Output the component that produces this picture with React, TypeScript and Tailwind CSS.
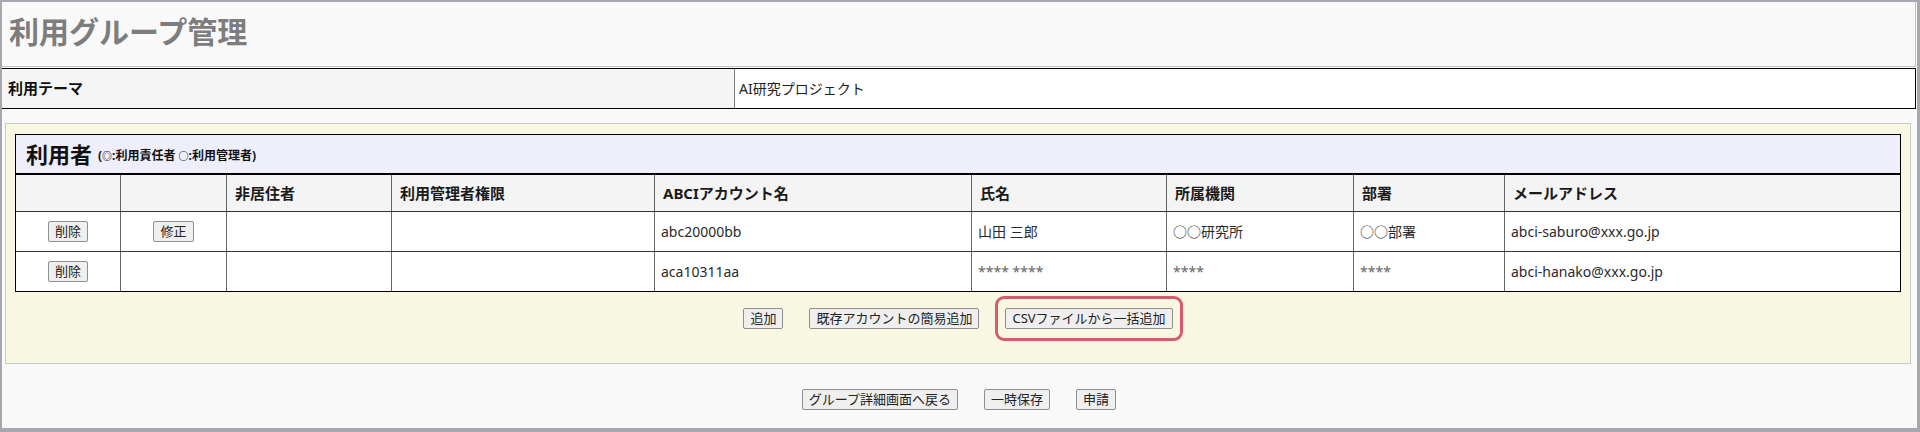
import React from "react";

const font = { fontFamily: '"Noto Sans", "Noto Sans CJK JP", sans-serif' };

function Btn({ children }: { children: React.ReactNode }) {
  return (
    <button className="h-[21px] px-[6px] bg-[#efefef] border border-[#8f8f8f] rounded-[2px] text-[13px] leading-none text-[#222] whitespace-nowrap">
      {children}
    </button>
  );
}

const cols =
  "grid grid-cols-[105px_106px_165px_263px_317px_195px_187px_151px_395px]";

export default function App() {
  const headers = ["", "", "非居住者", "利用管理者権限", "ABCIアカウント名", "氏名", "所属機関", "部署", "メールアドレス"];
  const rows: { del: boolean; edit: boolean; cells: string[]; masked: boolean[] }[] = [
    {
      del: true,
      edit: true,
      cells: ["", "", "abc20000bb", "山田 三郎", "○○研究所", "○○部署", "abci-saburo@xxx.go.jp"],
      masked: [false, false, false, false, false, false, false],
    },
    {
      del: true,
      edit: false,
      cells: ["", "", "aca10311aa", "**** ****", "****", "****", "abci-hanako@xxx.go.jp"],
      masked: [false, false, false, true, true, true, false],
    },
  ];
  return (
    <div
      style={font}
      className="w-[1920px] h-[432px] bg-[#a7a7af] pt-[2px] pl-[2px] pr-[3px] pb-[4px] overflow-hidden"
    >
      <div className="h-full bg-[#f9f9f9] flex flex-col">
        {/* header */}
        <div className="h-[65px] mr-[1px] border-b border-r border-[#c2c2c2] flex items-center pl-[7px] pb-[4px]">
          <h1 className="text-[30px] leading-none font-bold text-[#7d7d7d]">利用グループ管理</h1>
        </div>
        {/* theme */}
        <div className="mt-[1px] mr-[1px] h-[41px] border-y border-r border-black grid grid-cols-[733px_1fr]">
          <div className="bg-[#f5f5f5] border-r border-[#7a7a7a] flex items-center pl-[6px] text-[15px] font-bold text-[#111]">
            利用テーマ
          </div>
          <div className="bg-white flex items-center pl-[4px] text-[14px] text-[#222]">AI研究プロジェクト</div>
        </div>
        {/* users box */}
        <div className="mt-[14px] ml-[3px] mr-[6px] h-[241px] border border-[#c8c8c8] bg-[#f8f7e2] px-[9px] pt-[10px]">
          <div className="border border-black">
            <div className="h-[40px] bg-[#efeffb] border-b-2 border-black flex items-center pl-[10px]">
              <span className="text-[22px] font-bold text-[#111]">利用者</span>
              <span className="ml-[6px] text-[12px] font-bold text-[#111] mt-[4px]">(<span className="text-[10px]">◎</span>:利用責任者 <span className="text-[10px]">○</span>:利用管理者)</span>
            </div>
            <div className={`${cols} h-[37px] bg-[#f4f4f4] border-b border-[#333]`}>
              {headers.map((h, i) => (
                <div
                  key={i}
                  className={`flex items-center pl-[8px] text-[15px] font-bold text-[#1a1a1a] ${i < 8 ? "border-r border-[#666]" : ""}`}
                >
                  {h}
                </div>
              ))}
            </div>
            {rows.map((r, ri) => (
              <div
                key={ri}
                className={`${cols} bg-white ${ri === 0 ? "h-[40px] border-b border-[#333]" : "h-[39px]"}`}
              >
                <div className="flex items-center justify-center border-r border-[#666]">
                  {r.del && <Btn>削除</Btn>}
                </div>
                <div className="flex items-center justify-center border-r border-[#666]">
                  {r.edit && <Btn>修正</Btn>}
                </div>
                {r.cells.map((c, ci) => (
                  <div
                    key={ci}
                    className={`flex items-center pl-[6px] text-[14px] ${r.masked[ci] ? "text-[#666]" : "text-[#2a2a2a]"} ${ci < 6 ? "border-r border-[#666]" : ""}`}
                  >
                    {c}
                  </div>
                ))}
              </div>
            ))}
          </div>
          <div className="mt-[16px] flex justify-center gap-[26px]">
            <Btn>追加</Btn>
            <Btn>既存アカウントの簡易追加</Btn>
            <div className="-mx-[10px] -my-[12px] border-[3px] border-[#d85a6e] rounded-[9px] px-[7px] py-[9px] flex">
              <Btn>CSVファイルから一括追加</Btn>
            </div>
          </div>
        </div>
        {/* bottom buttons */}
        <div className="mt-[25px] flex justify-center gap-[26px] pr-[1px]">
          <Btn>グループ詳細画面へ戻る</Btn>
          <Btn>一時保存</Btn>
          <Btn>申請</Btn>
        </div>
      </div>
    </div>
  );
}
